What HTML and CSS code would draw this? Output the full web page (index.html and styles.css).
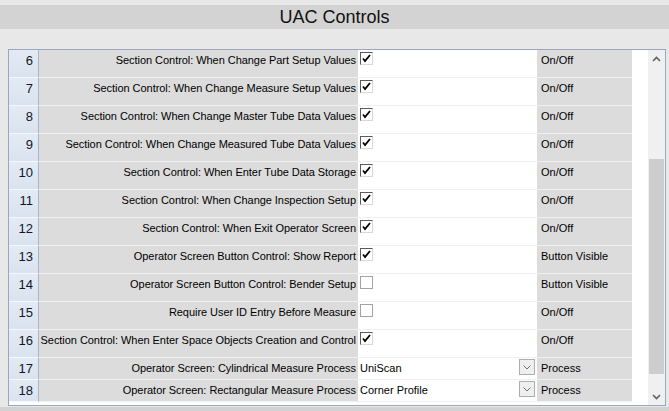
FILE: index.html
```html
<!DOCTYPE html>
<html>
<head>
<meta charset="utf-8">
<link rel="stylesheet" href="styles.css">
</head>
<body>
<div class="app">
  <div class="title-band"><span class="title">UAC Controls</span></div>
  <div class="frame">
    <div class="grid">
      <div class="rows">
        <div class="row tall"><div class="num">6</div><div class="label">Section Control: When Change Part Setup Values</div><div class="value"><span class="cb checked"><svg viewBox="0 0 9 9" width="9" height="9"><polyline points="1,4.5 3,7 8,1" fill="none" stroke="#000" stroke-width="1.8"/></svg></span></div><div class="type">On/Off</div></div>
        <div class="row tall"><div class="num">7</div><div class="label">Section Control: When Change Measure Setup Values</div><div class="value"><span class="cb checked"><svg viewBox="0 0 9 9" width="9" height="9"><polyline points="1,4.5 3,7 8,1" fill="none" stroke="#000" stroke-width="1.8"/></svg></span></div><div class="type">On/Off</div></div>
        <div class="row tall"><div class="num">8</div><div class="label">Section Control: When Change Master Tube Data Values</div><div class="value"><span class="cb checked"><svg viewBox="0 0 9 9" width="9" height="9"><polyline points="1,4.5 3,7 8,1" fill="none" stroke="#000" stroke-width="1.8"/></svg></span></div><div class="type">On/Off</div></div>
        <div class="row tall"><div class="num">9</div><div class="label">Section Control: When Change Measured Tube Data Values</div><div class="value"><span class="cb checked"><svg viewBox="0 0 9 9" width="9" height="9"><polyline points="1,4.5 3,7 8,1" fill="none" stroke="#000" stroke-width="1.8"/></svg></span></div><div class="type">On/Off</div></div>
        <div class="row tall"><div class="num">10</div><div class="label">Section Control: When Enter Tube Data Storage</div><div class="value"><span class="cb checked"><svg viewBox="0 0 9 9" width="9" height="9"><polyline points="1,4.5 3,7 8,1" fill="none" stroke="#000" stroke-width="1.8"/></svg></span></div><div class="type">On/Off</div></div>
        <div class="row tall"><div class="num">11</div><div class="label">Section Control: When Change Inspection Setup</div><div class="value"><span class="cb checked"><svg viewBox="0 0 9 9" width="9" height="9"><polyline points="1,4.5 3,7 8,1" fill="none" stroke="#000" stroke-width="1.8"/></svg></span></div><div class="type">On/Off</div></div>
        <div class="row tall"><div class="num">12</div><div class="label">Section Control: When Exit Operator Screen</div><div class="value"><span class="cb checked"><svg viewBox="0 0 9 9" width="9" height="9"><polyline points="1,4.5 3,7 8,1" fill="none" stroke="#000" stroke-width="1.8"/></svg></span></div><div class="type">On/Off</div></div>
        <div class="row tall"><div class="num">13</div><div class="label">Operator Screen Button Control: Show Report</div><div class="value"><span class="cb checked"><svg viewBox="0 0 9 9" width="9" height="9"><polyline points="1,4.5 3,7 8,1" fill="none" stroke="#000" stroke-width="1.8"/></svg></span></div><div class="type">Button Visible</div></div>
        <div class="row tall"><div class="num">14</div><div class="label">Operator Screen Button Control: Bender Setup</div><div class="value"><span class="cb"></span></div><div class="type">Button Visible</div></div>
        <div class="row tall"><div class="num">15</div><div class="label">Require User ID Entry Before Measure</div><div class="value"><span class="cb"></span></div><div class="type">On/Off</div></div>
        <div class="row tall"><div class="num">16</div><div class="label">Section Control: When Enter Space Objects Creation and Control</div><div class="value"><span class="cb checked"><svg viewBox="0 0 9 9" width="9" height="9"><polyline points="1,4.5 3,7 8,1" fill="none" stroke="#000" stroke-width="1.8"/></svg></span></div><div class="type">On/Off</div></div>
        <div class="row short"><div class="num">17</div><div class="label">Operator Screen: Cylindrical Measure Process</div><div class="value combo"><span class="combo-text">UniScan</span><span class="combo-btn"><svg viewBox="0 0 8 5" width="8" height="5"><polyline points="0.5,0.5 4,4 7.5,0.5" fill="none" stroke="#6f6f6f" stroke-width="1"/></svg></span></div><div class="type">Process</div></div>
        <div class="row short"><div class="num">18</div><div class="label">Operator Screen: Rectangular Measure Process</div><div class="value combo"><span class="combo-text">Corner Profile</span><span class="combo-btn"><svg viewBox="0 0 8 5" width="8" height="5"><polyline points="0.5,0.5 4,4 7.5,0.5" fill="none" stroke="#6f6f6f" stroke-width="1"/></svg></span></div><div class="type">Process</div></div>
      </div>
      <div class="filler"></div>
    </div>
    <div class="scrollbar">
      <div class="sb-btn"><svg viewBox="0 0 9 6" width="9" height="6"><polyline points="1,5 4.5,1.5 8,5" fill="none" stroke="#606060" stroke-width="1.6"/></svg></div>
      <div class="sb-track"><div class="sb-thumb"></div></div>
      <div class="sb-btn"><svg viewBox="0 0 9 6" width="9" height="6"><polyline points="1,1 4.5,4.5 8,1" fill="none" stroke="#606060" stroke-width="1.6"/></svg></div>
    </div>
  </div>
  <div class="bottom-strip"></div>
</div>
</body>
</html>
```

FILE: styles.css
```css
* { box-sizing: border-box; }
html, body { margin: 0; padding: 0; }
body {
  width: 669px;
  height: 411px;
  overflow: hidden;
  background: #e8e8e8;
  font-family: "Liberation Sans", Arial, sans-serif;
  color: #000;
}
.app {
  display: flex;
  flex-direction: column;
  height: 411px;
}
.title-band {
  margin-top: 5px;
  height: 24px;
  background: #d3d3d3;
  display: flex;
  align-items: center;
  justify-content: center;
}
.title {
  font-size: 18px;
  line-height: 20px;
  color: #111;
}
.frame {
  margin-top: 20px;
  margin-left: 8px;
  width: 658px;
  height: 357px;
  border: 1px solid #98a9bf;
  background: #fff;
  display: flex;
}
.grid {
  display: flex;
  flex: 1;
}
.rows {
  display: flex;
  flex-direction: column;
  width: 623px;
}
.row {
  display: grid;
  grid-template-columns: 30px 319px 179px 95px;
}
.row.tall { height: 28px; }
.row.short { height: 22px; }
.num {
  background: linear-gradient(#e3eaf4, #d9e3ef);
  border-right: 1px solid #a6b6ca;
  border-bottom: 1px solid #f4f7fb;
  font-size: 13px;
  line-height: 15px;
  padding: 3px 5px 0 0;
  text-align: right;
  color: #101828;
}
.label {
  background: #dcdcdc;
  border-bottom: 1px solid #f0f0f0;
  font-size: 11px;
  line-height: 13px;
  letter-spacing: -0.05px;
  padding: 4px 2px 0 0;
  text-align: right;
  white-space: nowrap;
}
.value {
  background: #fff;
  border-bottom: 1px solid #f0f0f0;
  padding: 2px 0 0 2px;
}
.type {
  background: #dcdcdc;
  border-bottom: 1px solid #f0f0f0;
  font-size: 11px;
  line-height: 13px;
  padding: 4px 0 0 4px;
  white-space: nowrap;
}
.cb {
  display: flex;
  align-items: center;
  justify-content: center;
  width: 13px;
  height: 13px;
  border: 1px solid #a3a3a3;
  background: #fff;
}
.cb.checked {
  border-top-color: #5a5a5a;
  border-left-color: #5a5a5a;
  border-right-color: #d8d8d8;
  border-bottom-color: #d8d8d8;
}
.combo {
  display: flex;
  align-items: flex-start;
  justify-content: space-between;
  padding: 0 2px 0 2px;
}
.combo-text {
  font-size: 11px;
  line-height: 13px;
  padding-top: 4px;
}
.combo-btn {
  width: 16px;
  height: 16px;
  margin-top: 1px;
  border: 1px solid #adadad;
  background: #efefef;
  display: flex;
  align-items: center;
  justify-content: center;
}
.filler {
  flex: 1;
  background: #fff;
}
.scrollbar {
  width: 17px;
  background: #f0f0f0;
  display: flex;
  flex-direction: column;
}
.sb-btn {
  height: 17px;
  display: flex;
  align-items: center;
  justify-content: center;
}
.sb-track {
  flex: 1;
  padding-top: 92px;
  padding-bottom: 14px;
  display: flex;
  flex-direction: column;
}
.sb-thumb {
  flex: 1;
  margin: 0 1px;
  background: #cdcdcd;
}
.bottom-strip {
  margin-top: 1px;
  flex: 1;
  background: #d2d2d2;
}
```
